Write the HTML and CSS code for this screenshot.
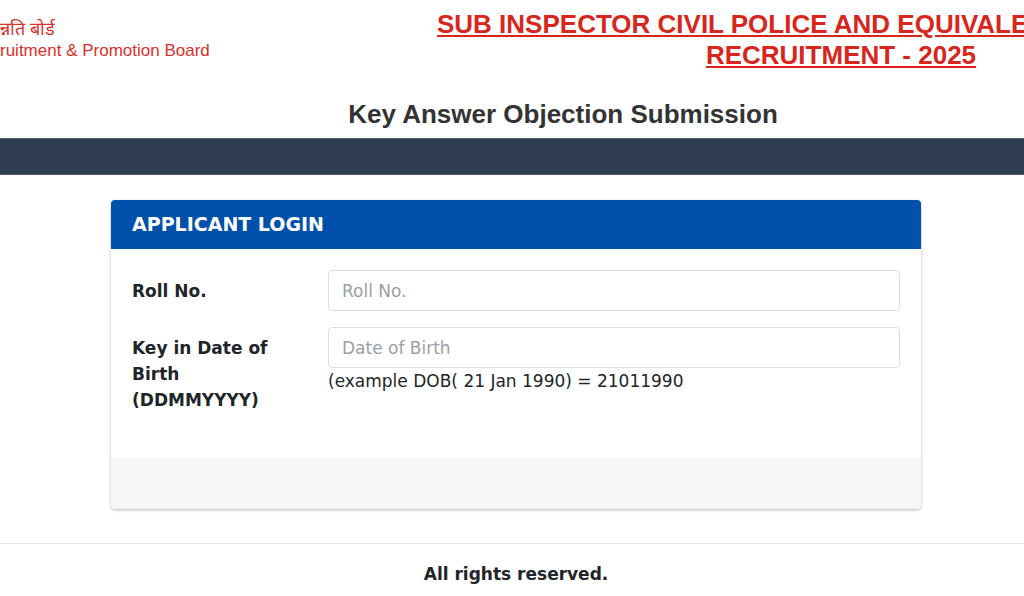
FILE: index.html
```
<!DOCTYPE html>
<html lang="en">
<head>
    <meta charset="utf-8">
    <title>Key Answer Objection Submission</title>
    <link rel="stylesheet" href="styles.css">
</head>
<body>
    <header class="site-header">
        <div class="board-name">
            <div class="board-hindi" lang="hi">न्नति बोर्ड</div>
            <div>ruitment &amp; Promotion Board</div>
        </div>
        <h1 class="exam-title">SUB INSPECTOR CIVIL POLICE AND EQUIVALENT POST DIRECT<br>RECRUITMENT - 2025</h1>
    </header>
    <h2 class="page-title">Key Answer Objection Submission</h2>
    <nav class="navbar"></nav>

    <main class="content">
        <form class="card">
            <h3 class="card-header">APPLICANT LOGIN</h3>
            <div class="card-body">
                <div class="form-row">
                    <label for="rollno">Roll No.</label>
                    <div>
                        <input type="text" id="rollno" class="form-control" placeholder="Roll No.">
                    </div>
                </div>
                <div class="form-row">
                    <label for="dob">Key in Date of Birth (DDMMYYYY)</label>
                    <div>
                        <input type="text" id="dob" class="form-control" placeholder="Date of Birth">
                        <div>(example DOB( 21 Jan 1990) = 21011990</div>
                    </div>
                </div>
            </div>
            <div class="card-footer"></div>
        </form>
    </main>

    <footer class="footer">All rights reserved.</footer>
</body>
</html>
```

FILE: styles.css
```
* {
    box-sizing: border-box;
}

body {
    margin: 0;
    background-color: #fff;
    color: #212529;
    font-family: Verdana, "DejaVu Sans", sans-serif;
    font-size: 17px;
    line-height: 26px;
    overflow: hidden;
}

h1, h2, h3 {
    margin: 0;
}

.site-header {
    display: flex;
    padding-top: 9px;
    font-family: Arial, "Liberation Sans", sans-serif;
}

.board-name {
    flex: 0 0 437px;
    padding-top: 9px;
    color: #d9302c;
    line-height: 22px;
    white-space: nowrap;
}

.board-hindi {
    font-size: 18px;
}

.exam-title {
    flex: none;
    color: #d9261c;
    font-size: 26px;
    line-height: 31px;
    text-align: center;
    text-decoration: underline;
    white-space: nowrap;
}

.page-title {
    margin: 27px 0 8px;
    padding-left: 102px;
    color: #333;
    font-family: Arial, "Liberation Sans", sans-serif;
    font-size: 26px;
    line-height: 32px;
    text-align: center;
}

.navbar {
    height: 37px;
    background-color: #2e3e50;
    border-top: 1px solid #4f6070;
    border-bottom: 1px solid #4f6070;
}

.content {
    padding: 25px 103px 34px 111px;
}

.card {
    border-radius: 4px;
    box-shadow: 0 1px 3px rgba(0, 0, 0, 0.3);
    overflow: hidden;
}

.card-header {
    padding: 11px 21px 12px;
    background-color: #0050ac;
    color: #fff;
    font-size: 19px;
    line-height: 26px;
}

.card-body {
    display: flex;
    flex-direction: column;
    gap: 16px;
    padding: 21px 21px 45px;
}

.form-row {
    display: grid;
    grid-template-columns: 175px 1fr;
    gap: 21px;
}

.form-row label {
    padding: 8px 21px 0 0;
    font-weight: bold;
}

.form-control {
    display: block;
    width: 100%;
    height: 41px;
    padding: 0 13px;
    border: 1px solid #dadfe4;
    border-radius: 4px;
    background-color: #fff;
    color: #495057;
    font: inherit;
}

.form-control::placeholder {
    color: #999fa5;
}

.card-footer {
    height: 51px;
    background-color: #f6f6f6;
}

.footer {
    padding: 17px 0;
    padding-left: 8px;
    border-top: 1px solid #e5e5e5;
    font-weight: bold;
    text-align: center;
}
```
